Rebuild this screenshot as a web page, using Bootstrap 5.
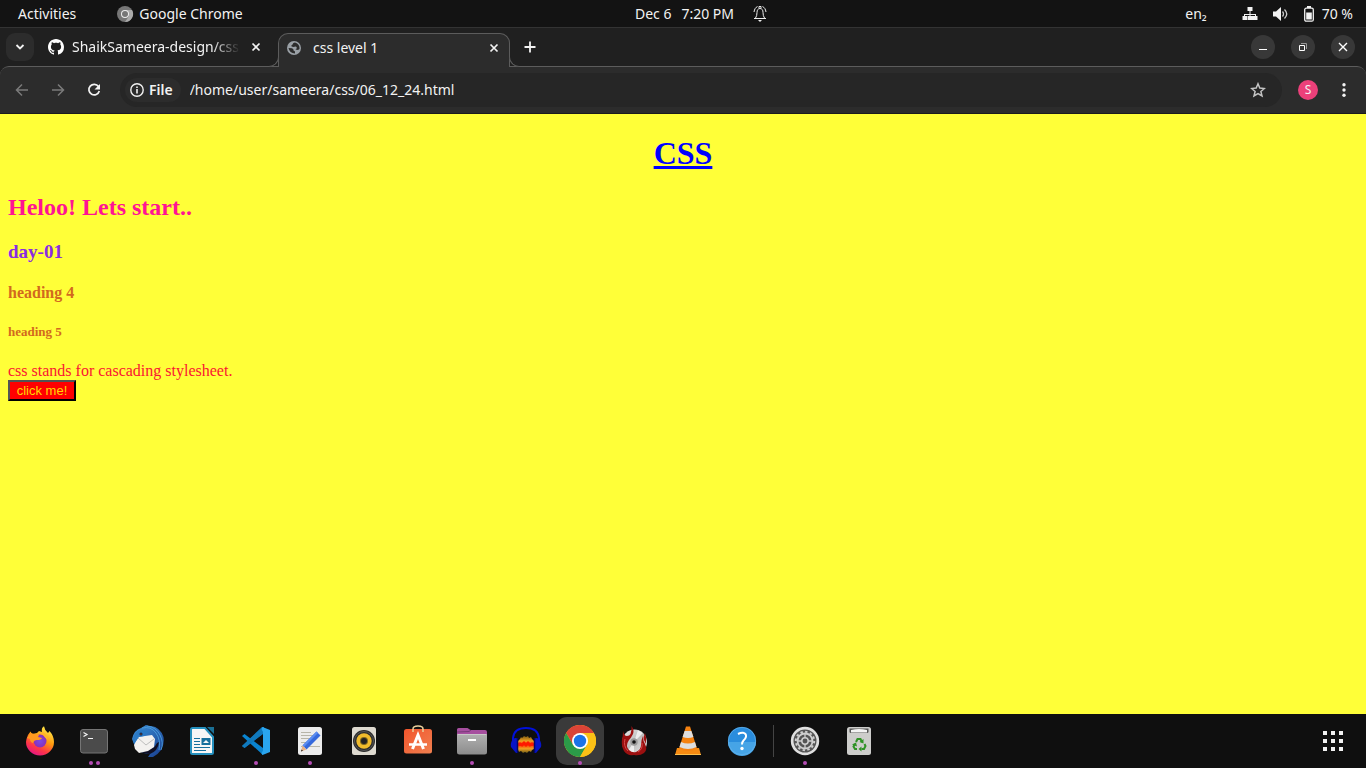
<!DOCTYPE html>
<html lang="en">
<head>
<meta charset="utf-8">
<meta name="viewport" content="width=device-width, initial-scale=1">
<title>css level 1</title>
<link href="https://cdn.jsdelivr.net/npm/bootstrap@5.3.0/dist/css/bootstrap.min.css" rel="stylesheet">
<style>
  :root { --line: #5c5c5c; --frame: #202020; --bar: #2c2c2c; }
  body { font-family: "Noto Sans", "Open Sans", sans-serif; font-size: 14px; line-height: 20px; background: #0f0f0f; color: #f2f2f2; }
  svg { display: block; flex: none; }
  button { font: inherit; color: inherit; }
  .plain { background: none; border: 0; padding: 0; }

  .topbar { height: 28px; background: #131313; border-bottom: 1px solid #333; padding: 0 13px 0 18px; }
  .topbar > div { flex: 1 1 0; }
  .topbar > .clock { flex: none; gap: 10px; padding-left: 32px; }
  .clock svg { margin-left: 8px; }
  .current-app { gap: 5px; margin-left: 40px; }
  .status { gap: 15px; }
  .lang { margin-right: 20px; }
  .tiny { font-size: 14px; line-height: 10px; }

  .tabstrip { height: 38px; background: var(--frame); padding: 5px 11px 0 6px; }
  .tabmenu { width: 28px; height: 28px; border-radius: 9px; background: #2c2c2c; }
  .tab { height: 28px; }
  .tab-idle { width: 244px; padding: 0 14px; }
  .tab-name { overflow: hidden; white-space: nowrap; }
  .fade-end { -webkit-mask-image: linear-gradient(to right, #000 140px, transparent 168px); mask-image: linear-gradient(to right, #000 140px, transparent 168px); }
  .tab-open { position: relative; z-index: 1; width: 232px; height: 34px; padding: 0 9px 6px 8px; background: var(--bar); border: 1px solid var(--line); border-bottom: 0; border-radius: 10px 10px 0 0; }
  .tab-open::before, .tab-open::after { content: ""; position: absolute; bottom: 0; width: 11px; height: 11px; border: 1px solid var(--line); border-top: 0; background: var(--frame); }
  .tab-open::before { left: -11px; border-left: 0; border-radius: 0 0 10px 0; }
  .tab-open::after { right: -11px; border-right: 0; border-radius: 0 0 0 10px; }
  .winbtn { width: 24px; height: 24px; border-radius: 50%; background: #383838; }

  .under { background: var(--frame); }
  .toolbar { height: 48px; background: var(--bar); border-top: 1px solid var(--line); border-bottom: 1px solid #1c1c1c; border-radius: 9px 9px 0 0; padding: 0 14px; }
  .nav-tools { gap: 20px; margin-right: 18px; }
  .side-tools { gap: 18px; margin-left: 16px; }
  .omnibox { height: 34px; border-radius: 17px; background: #262626; padding: 0 16px 0 5px; }
  .chip { height: 24px; border-radius: 12px; background: #2c2c2c; padding: 0 8px 0 5px; gap: 5px; font-weight: 600; }
  .url { background: none; border: 0; color: #f2f2f2; outline: 0; padding: 0 0 0 9px; min-width: 0; }
  .avatar { width: 20px; height: 20px; border-radius: 50%; background: #ec407a; font-size: 12px; line-height: 20px; }

  .sheet { background: #ffff38; font-family: "Liberation Serif", serif; padding: 21px 8px; }
  .sheet h1, .sheet h2, .sheet h3, .sheet h4, .sheet h5, .sheet p { margin: 0; font-weight: 700; }
  .sheet h1 { font-size: 32px; line-height: 37px; color: #0000ff; text-decoration: underline; margin-bottom: 22px; }
  .sheet h2 { font-size: 24px; line-height: 27px; color: #ff1493; margin-bottom: 20px; }
  .sheet h3 { font-size: 19px; line-height: 22px; color: #8a2be2; margin-bottom: 21px; }
  .sheet h4 { font-size: 16px; line-height: 18px; color: #d2691e; margin-bottom: 22px; }
  .sheet h5 { font-size: 13px; line-height: 16px; color: #d2691e; margin-bottom: 22px; }
  .sheet p { font-size: 16px; line-height: 18px; color: #fa1432; font-weight: 400; }
  .clicker { display: block; width: 68px; height: 21px; padding: 0; font: 13px/17px "Liberation Sans", sans-serif; color: #ffd700; background: #f00; border: 2px outset #000; }

  .dock { height: 54px; background: #0f0f0f; padding: 0 17px 0 13px; }
  .app { position: relative; width: 54px; height: 54px; color: inherit; }
  .app-current::before { content: ""; position: absolute; inset: 3px; border-radius: 11px; background: #3a3a3a; }
  .app svg { position: relative; }
  .dots { position: absolute; left: 0; right: 0; bottom: 3px; display: flex; justify-content: center; gap: 3px; }
  .dots i { width: 4px; height: 4px; border-radius: 50%; background: #b44cb4; }
  .rule { width: 1px; height: 32px; background: #444; margin: 0 4px; }
</style>
</head>
<body class="d-flex flex-column min-vh-100">

<header class="topbar d-flex align-items-center">
  <div class="d-flex align-items-center">
    <button class="plain">Activities</button>
    <button class="plain current-app d-flex align-items-center">
      <svg width="18" height="18" viewBox="0 0 18 18"><circle cx="9" cy="9" r="8" fill="#777"/><path d="M9 5h7A8 8 0 0 1 9 17l4-6z" fill="#aaa"/><circle cx="9" cy="9" r="4" fill="#eee"/><circle cx="9" cy="9" r="3" fill="#777"/></svg>
      <span>Google Chrome</span>
    </button>
  </div>
  <div class="clock d-flex align-items-center">
    <span>Dec 6</span><span>7:20 PM</span>
    <svg width="16" height="18" viewBox="0 0 16 18" fill="none" stroke="#eee"><path d="M2 13.500h12M3.500 13Q5 11 5 7.500C5 5 6 3.500 8 3.500s3 1.500 3 4Q11 11 12.500 13M5.500 1.500C3.500 2.500 2.500 4 2 7M10.500 1.500c2 1 3 2.500 3.500 5.500M7 3V1.500h2V3"/><path d="M6 15h4l-2 2z" fill="#eee" stroke="none"/></svg>
  </div>
  <div class="status d-flex align-items-center justify-content-end">
    <span class="lang">en<span class="tiny">₂</span></span>
    <svg width="16" height="16" viewBox="0 0 16 16" fill="#f2f2f2"><path d="M5.500 1h5v4H8.500v3H14v2h1.500v4h-5v-4H13V9H8.500v1h2v4h-5v-4h2V9H3v1h2v4H.5v-4H2V8h5.500V5h-2z"/></svg>
    <svg width="16" height="14" viewBox="0 0 16 14"><path d="M0 4.500h3L8 0v14L3 9.500H0z" fill="#f2f2f2"/><path d="M9.500 4.500q2 2.500 0 5M11.500 2.500q4.500 4.500 0 9" fill="none" stroke="#ccc" stroke-width="1.300"/></svg>
    <span class="d-flex align-items-center gap-2"><svg width="10" height="16" viewBox="0 0 10 16"><rect x=".7" y="2.200" width="8.600" height="13" rx="1.500" fill="none" stroke="#f2f2f2" stroke-width="1.300"/><path d="M3 0h4v2H3zM2.200 6.500h5.600v7H2.200z" fill="#f2f2f2"/></svg>70 %</span>
  </div>
</header>

<nav class="tabstrip d-flex align-items-start">
  <button class="plain tabmenu d-flex align-items-center justify-content-center" aria-label="Search tabs"><svg width="10" height="10" viewBox="0 0 10 10" fill="none" stroke="#f2f2f2" stroke-width="1.800"><path d="M1.500 3L5 6.500 8.500 3"/></svg></button>
  <div class="tab tab-idle d-flex align-items-center">
    <svg width="16" height="16" viewBox="0 0 16 16" fill="#fff"><path d="M8 0C3.580 0 0 3.580 0 8c0 3.540 2.290 6.530 5.470 7.590.4.070.55-.17.55-.38 0-.19-.01-.82-.01-1.490-2.010.37-2.530-.49-2.690-.94-.09-.23-.48-.94-.82-1.130-.28-.15-.68-.52-.01-.53.63-.01 1.080.58 1.230.82.72 1.210 1.870.87 2.330.66.07-.52.28-.87.51-1.070-1.780-.2-3.640-.89-3.640-3.950 0-.87.31-1.590.82-2.150-.08-.2-.36-1.020.08-2.120 0 0 .67-.21 2.200.82.64-.18 1.320-.27 2-.27s1.360.09 2 .27c1.530-1.040 2.200-.82 2.200-.82.44 1.100.16 1.920.08 2.120.51.56.82 1.270.82 2.150 0 3.070-1.870 3.750-3.650 3.950.29.25.54.73.54 1.480 0 1.070-.01 1.930-.01 2.200 0 .21.15.46.55.38A8.010 8.010 0 0 0 16 8c0-4.420-3.580-8-8-8z"/></svg>
    <span class="tab-name fade-end flex-fill ms-2">ShaikSameera-design/css</span>
    <button class="plain ms-2" aria-label="Close tab"><svg width="16" height="16" viewBox="0 0 16 16" stroke="#f2f2f2" stroke-width="1.700"><path d="M4.500 4.500l7 7M11.500 4.500l-7 7"/></svg></button>
  </div>
  <div class="tab tab-open d-flex align-items-center">
    <svg width="14" height="14" viewBox="0 0 14 14"><circle cx="7" cy="7" r="7" fill="#9aa0a6"/><path d="M1.500 7L5 7.300Q7 8 6.500 9.500L8 10.500v2Q2.500 12 1.500 7zM8 1.500q-2 0-2.500 2L4 5l2 1 3-.5L10 7 8.500 8.500 11 9l1.500-1Q13 3 8 1.500z" fill="#2c2c2c"/></svg>
    <span class="tab-name flex-fill ms-2 ps-1">css level 1</span>
    <button class="plain" aria-label="Close tab"><svg width="12" height="16" viewBox="2 0 12 16" stroke="#f2f2f2" stroke-width="1.700"><path d="M4.500 4.500l7 7M11.500 4.500l-7 7"/></svg></button>
  </div>
  <button class="plain tab d-flex align-items-center ms-2" aria-label="New tab"><svg width="24" height="24" viewBox="0 0 24 24" stroke="#f2f2f2" stroke-width="1.800"><path d="M12 6.500v11M6.500 12h11"/></svg></button>
  <div class="tab d-flex align-items-center ms-auto gap-3">
    <button class="plain winbtn" aria-label="Minimize"><svg width="24" height="24" viewBox="0 0 24 24"><path d="M8 14h8v1H8z" fill="#fff"/></svg></button>
    <button class="plain winbtn" aria-label="Restore"><svg width="24" height="24" viewBox="0 0 24 24" fill="none"><path d="M10 8.500h5.500V14" stroke="#999"/><path d="M8.500 10.500h5v5h-5z" stroke="#fff"/></svg></button>
    <button class="plain winbtn" aria-label="Close"><svg width="24" height="24" viewBox="0 0 24 24" stroke="#fff" stroke-width="1.400"><path d="M8 8l8 8M16 8l-8 8"/></svg></button>
  </div>
</nav>

<div class="under">
<div class="toolbar d-flex align-items-center">
  <div class="nav-tools d-flex">
    <button class="plain" aria-label="Back"><svg width="16" height="16" viewBox="0 0 16 16" fill="none" stroke="#7a7a7a" stroke-width="1.500"><path d="M14 8H3M8 2.500L2.500 8 8 13.500"/></svg></button>
    <button class="plain" aria-label="Forward"><svg width="16" height="16" viewBox="0 0 16 16" fill="none" stroke="#7a7a7a" stroke-width="1.500"><path d="M2 8h11M8 2.500L13.500 8 8 13.500"/></svg></button>
    <button class="plain" aria-label="Reload"><svg width="16" height="16" viewBox="0 0 16 16"><path d="M12.500 4.500A5.300 5.300 0 1 0 13.300 9" fill="none" stroke="#f2f2f2" stroke-width="1.700"/><path d="M14 2v5.500H8.500z" fill="#f2f2f2"/></svg></button>
  </div>
  <div class="omnibox d-flex align-items-center flex-fill">
    <button class="plain chip d-flex align-items-center"><svg width="14" height="14" viewBox="0 0 14 14"><circle cx="7" cy="7" r="6.200" fill="none" stroke="#f2f2f2" stroke-width="1.400"/><path d="M6.200 3.500h1.600V5H6.200zM6.200 6h1.600v4.500H6.200z" fill="#f2f2f2"/></svg>File</button>
    <input class="url flex-fill" type="text" aria-label="Address" value="/home/user/sameera/css/06_12_24.html">
    <button class="plain" aria-label="Bookmark"><svg width="16" height="16" viewBox="0 0 16 16" fill="none" stroke="#c4c4c4" stroke-width="1.500"><path d="M8 1.800l1.800 4.300 4.600.4-3.500 3 1.100 4.500-4-2.400L4 14l1.100-4.500-3.500-3 4.600-.4z"/></svg></button>
  </div>
  <div class="side-tools d-flex align-items-center">
    <button class="plain avatar">S</button>
    <button class="plain" aria-label="Menu"><svg width="16" height="16" viewBox="0 0 16 16" fill="#f2f2f2"><circle cx="8" cy="2.800" r="1.700"/><circle cx="8" cy="8" r="1.700"/><circle cx="8" cy="13.200" r="1.700"/></svg></button>
  </div>
</div>
</div>

<main class="sheet flex-fill">
  <h1 class="text-center">CSS</h1>
  <h2>Heloo! Lets start..</h2>
  <h3>day-01</h3>
  <h4>heading 4</h4>
  <h5>heading 5</h5>
  <p>css stands for cascading stylesheet.</p>
  <button class="clicker">click me!</button>
</main>

<footer class="dock d-flex align-items-center">
  <svg width="0" height="0" class="position-absolute">
    <defs>
      <linearGradient id="fox" x1=".8" y1="0" x2=".3" y2="1"><stop offset="0" stop-color="#fff44f"/><stop offset=".45" stop-color="#ff980e"/><stop offset=".75" stop-color="#ff3647"/><stop offset="1" stop-color="#e31587"/></linearGradient>
      <radialGradient id="orb"><stop offset="0" stop-color="#7a4be8"/><stop offset="1" stop-color="#8a2fb8"/></radialGradient>
      <linearGradient id="bird" x1="0" y1="0" x2="1" y2="1"><stop offset="0" stop-color="#3f95dd"/><stop offset="1" stop-color="#173b8c"/></linearGradient>
      <linearGradient id="steel" x1="0" y1="0" x2="0" y2="1"><stop offset="0" stop-color="#b0b0b0"/><stop offset="1" stop-color="#8c8c8c"/></linearGradient>
      <linearGradient id="bag" x1="0" y1="0" x2="1" y2="1"><stop offset="0" stop-color="#f2552c"/><stop offset="1" stop-color="#f08050"/></linearGradient>
      <linearGradient id="disc" x1="0" y1="0" x2="1" y2="1"><stop offset="0" stop-color="#eee"/><stop offset=".5" stop-color="#bbb"/><stop offset="1" stop-color="#eee"/></linearGradient>
      <linearGradient id="blaze" x1="0" y1="0" x2="0" y2="1"><stop offset="0" stop-color="#7a5a14"/><stop offset=".3" stop-color="#f0a020"/><stop offset=".5" stop-color="#ff3000"/><stop offset=".75" stop-color="#f0a020"/><stop offset="1" stop-color="#6a5a18"/></linearGradient>
    </defs>
  </svg>
  <a href="#" class="app d-flex align-items-center justify-content-center" aria-label="Firefox"><svg width="32" height="32" viewBox="0 0 32 32"><path d="M2.500 14Q4 9 6.500 6.500L8 9l5-1 2-2 3 1Q17 3 20 1.200 20.500 5 24 8l1.500-2Q30 11 30 17a14 13.500 0 0 1-28 0z" fill="url(#fox)"/><circle cx="16" cy="16" r="6.500" fill="url(#orb)"/><path d="M3 13l4-5 3 1 5 1-1 2 4 1q-1 2-5 2-3 0-4 3-3-1-3-4z" fill="#ff9a20"/><path d="M18 7q6 2 5.500 8l-3-3q-1-3-4-4z" fill="#ffb52a"/></svg></a>
  <a href="#" class="app d-flex align-items-center justify-content-center" aria-label="Terminal"><svg width="32" height="32" viewBox="0 0 32 32"><rect x="2.500" y="4.500" width="27" height="23.500" rx="2.500" fill="#4b4b4b" stroke="#757575"/><path d="M5.500 7.500l3.500 2-3.500 2M10 13.500h5" fill="none" stroke="#f4f4f4" stroke-width="1.200"/></svg><span class="dots"><i></i><i></i></span></a>
  <a href="#" class="app d-flex align-items-center justify-content-center" aria-label="Thunderbird"><svg width="32" height="32" viewBox="0 0 32 32"><path d="M0 14Q2 5 9 3l5-3q2 1 5 1 9 1 12.500 11 2 13-10.500 20l-5 0 2-3Q5 29 0 14z" fill="url(#bird)"/><path d="M10 3q9-2 14 5t3 17M15 1q9 1 13 9t1 15" fill="none" stroke="#4c9edc" stroke-width=".9"/><path d="M8 26q4-3 9-2 5 0 8-6l2-1q-1 9-9 12-6 0-10-3z" fill="#0f0f24"/><path d="M2 20l4-8 14-2 3 4-1 8-6 4-9 2-4-4z" fill="#f3f1ef"/><path d="M6 13l8 7 8-6" fill="none" stroke="#bdbdbd"/><path d="M1 14Q3 5 10 5l10 2q-6 0-8 4l-5 1-5 7z" fill="#2b79c4"/><circle cx="9" cy="9" r="1.500" fill="#0b1a44"/><circle cx="9" cy="9" r=".6" fill="#e07820"/></svg></a>
  <a href="#" class="app d-flex align-items-center justify-content-center" aria-label="LibreOffice Writer"><svg width="32" height="32" viewBox="0 0 32 32"><path d="M6.500 3H19l8 9v15.500a1.500 1.500 0 0 1-1.500 1.500h-19A1.500 1.500 0 0 1 5 27.500v-23A1.500 1.500 0 0 1 6.500 3z" fill="#f6f6f6" stroke="#2590be" stroke-width="2"/><path d="M21 2h7v7z" fill="#1b7095"/><path d="M8 13.500h6M8 16.500h6M8 19.500h6M8 22.500h16M8 25.500h12" stroke="#176f9c" stroke-width="1.200"/><rect x="15.500" y="13" width="9" height="7" fill="#176f9c"/><path d="M17 18l3-3 3 3z" fill="#f6f6f6"/></svg></a>
  <a href="#" class="app d-flex align-items-center justify-content-center" aria-label="Visual Studio Code"><svg width="32" height="32" viewBox="0 0 32 32"><path d="M2 11l2.500-2L23 23v7z" fill="#0a84d0"/><path d="M2 21l2.500 2L23 9V2z" fill="#0070b8"/><path d="M2 21l2.500 2L24 8V2L22 2z" fill="#1079bd"/><path d="M22.500 2L30 5v22l-7.500 3-1-1.500 1.500-3V7l-1.500-3z" fill="#2aa5ee"/></svg><span class="dots"><i></i></span></a>
  <a href="#" class="app d-flex align-items-center justify-content-center" aria-label="Text Editor"><svg width="32" height="32" viewBox="0 0 32 32"><rect x="4" y="2" width="24" height="28" rx="2.500" fill="#ececec"/><path d="M7 7.500h10M7 10.500h13M7 13.500h11M7 17.500h9M7 21.500h19" stroke="#b7b5a9"/><path d="M22.500 6.500l4 4-14 14-4-4z" fill="#3468dc"/><path d="M22.500 6.500l1.500 1.500L10 22l-1.500-1.500z" fill="#5a8cf0"/><path d="M8.500 20.500l4 4L7 26.500z" fill="#e9b182"/><path d="M7.500 24.500l1.500 1.300-2 .8z" fill="#222"/></svg><span class="dots"><i></i></span></a>
  <a href="#" class="app d-flex align-items-center justify-content-center" aria-label="Rhythmbox"><svg width="32" height="32" viewBox="0 0 32 32"><rect x="4" y="2" width="24" height="28" rx="2.500" fill="#dedad0"/><circle cx="16" cy="16" r="11" fill="#2b2b2b"/><circle cx="16" cy="16" r="9.500" fill="none" stroke="#555"/><circle cx="16" cy="16" r="7.700" fill="#f0bb2c"/><circle cx="16" cy="16" r="4" fill="#7d6520"/><circle cx="16" cy="16" r="3" fill="#222"/></svg></a>
  <a href="#" class="app d-flex align-items-center justify-content-center" aria-label="Software"><svg width="32" height="32" viewBox="0 0 32 32"><rect x="2" y="4" width="28" height="24.500" rx="2.500" fill="url(#bag)"/><path d="M11 7V4q0-3 5-3t5 3v3" fill="none" stroke="#e8cf9b" stroke-width="1.500"/><path d="M10.500 24L16 10l5.500 14" fill="none" stroke="#fff" stroke-width="3"/><path d="M7 19.500h18" stroke="#fff" stroke-width="2.500"/></svg></a>
  <a href="#" class="app d-flex align-items-center justify-content-center" aria-label="Files"><svg width="32" height="32" viewBox="0 0 32 32"><path d="M1 20V4.500a1.500 1.500 0 0 1 1.500-1.500h9l3 2H29a2 2 0 0 1 2 2v12z" fill="#a64f9f"/><path d="M1 7l12-.5L15 5" fill="none" stroke="#773b78"/><path d="M1 9.500h30V27a2.500 2.500 0 0 1-2.500 2.500h-25A2.500 2.500 0 0 1 1 27z" fill="url(#steel)"/><path d="M1.500 9.500h29" stroke="#c9c9c9"/><rect x="12" y="14" width="8" height="2" fill="#fff"/></svg><span class="dots"><i></i></span></a>
  <a href="#" class="app d-flex align-items-center justify-content-center" aria-label="Audacity"><svg width="32" height="32" viewBox="0 0 32 32"><path d="M8 16l2-2 1-2 1 1 2-2 2 1 2-1 1 2 2-1 1 2 2 2v8l-2 1-1 2-2-1-2 2-2-1-2 1-2-2-2 1-1-2-2-1z" fill="url(#blaze)"/><path d="M8 20l2-1 2 1 2-2 2 2 2-2 2 2 2-1 2 1" fill="none" stroke="#ff1800" stroke-width="3"/><path d="M3 20V13Q4 3 16 3t13 10v7" fill="none" stroke="#0010dc" stroke-width="2"/><path d="M3 14q3-2 5 0v14H6l-5-6q-1-4 2-8zM29 14q-3-2-5 0v14h2l5-6q1-4-2-8z" fill="#0714c8"/><path d="M7.500 13v15M24.500 13v15" stroke="#050866" stroke-width="1.500"/></svg></a>
  <a href="#" class="app app-current d-flex align-items-center justify-content-center" aria-label="Google Chrome"><svg width="32" height="32" viewBox="0 0 32 32"><circle cx="16" cy="16" r="16" fill="#fbc116"/><path d="M16 8h13.860A16 16 0 0 0 2.140 8l6.930 12z" fill="#db4437"/><path d="M2.140 8A16 16 0 0 0 16 32l6.930-12L16 23.500 9.070 20z" fill="#2b9b48"/><path d="M16 8h13.860A16 16 0 0 1 16 32l6.930-12z" fill="#fbc116"/><circle cx="16" cy="16" r="8" fill="#fff"/><circle cx="16" cy="16" r="6.200" fill="#1a73e8"/></svg><span class="dots"><i></i></span></a>
  <a href="#" class="app d-flex align-items-center justify-content-center" aria-label="Brasero"><svg width="32" height="32" viewBox="0 0 32 32"><circle cx="16.500" cy="17" r="12.500" fill="url(#disc)"/><path d="M16 17L20 5l5 3zM16 17L9 27l7 3z" fill="#fff" opacity=".7"/><path d="M5 6q1 5 4 5 5 0 4.500-10 3 4 1.500 8-2 4-4 6-4 6 0 10 3 3 7 2 5-2 5-7 0-5 2-9 0 5 2 8 3 6-1 9-4 3-10 2-7 1-10-4-3-5-2-12 1-3 1-8z" fill="#9b1010"/><path d="M27 8q-2 4-1 7l2 4q1-6-1-11z" fill="#9b1010"/><path d="M7 14q-2 7 3 12M24 18q1 6-4 9" fill="none" stroke="#d94a4a"/><circle cx="16" cy="17" r="3.700" fill="#999"/><circle cx="16" cy="17" r="1.800" fill="#111"/></svg></a>
  <a href="#" class="app d-flex align-items-center justify-content-center" aria-label="VLC"><svg width="32" height="32" viewBox="0 0 32 32"><path d="M5 23h22l2 7H3z" fill="#f78b12"/><path d="M14 1.500h4l7 22q-9 5-18 0z" fill="#f58210"/><path d="M12.600 6h6.800l2 6q-5.400 2-10.800 0zM9 17q7 3 14 0l1.500 5q-8.500 4-17 0z" fill="#dedede"/><path d="M3 29h26v1H3z" fill="#ffc04c"/></svg></a>
  <a href="#" class="app d-flex align-items-center justify-content-center" aria-label="Help"><svg width="32" height="32" viewBox="0 0 32 32"><circle cx="16" cy="16" r="14" fill="#2a8ddd"/><path d="M2 17h28a14 14 0 0 1-28 0z" fill="#46a4e6"/><circle cx="16" cy="16" r="13.700" fill="none" stroke="#67b5ec" stroke-width=".7"/><path d="M12 9q3-1.500 5-1.200 3.500.7 3 4-.5 2-2.500 3.700-1.500 1.500-1.500 4" fill="none" stroke="#fff" stroke-width="2"/><circle cx="16" cy="23.500" r="1.700" fill="#fff"/></svg></a>
  <span class="rule"></span>
  <a href="#" class="app d-flex align-items-center justify-content-center" aria-label="Settings"><svg width="32" height="32" viewBox="0 0 32 32" fill="none"><circle cx="16" cy="16" r="14.200" fill="#dfdfdf"/><circle cx="16" cy="16" r="11.500" fill="#555"/><circle cx="16" cy="16" r="9.200" stroke="#cfcfcf" stroke-width="2" stroke-dasharray="2.400 2.400"/><circle cx="16" cy="16" r="7.500" stroke="#cfcfcf" stroke-width="1.800"/><circle cx="16" cy="16" r="3.200" stroke="#cfcfcf" stroke-width="1.500"/><path d="M16 9v4M16 19v4M9 16h4M19 16h4" stroke="#cfcfcf" stroke-width="1.300"/></svg><span class="dots"><i></i></span></a>
  <a href="#" class="app d-flex align-items-center justify-content-center" aria-label="Trash"><svg width="32" height="32" viewBox="0 0 32 32"><rect x="4" y="2" width="24" height="28" rx="2.500" fill="#cdcdcb"/><path d="M6.500 3.500h19V6.500q0 1.500-1.500 1.500H8q-1.500 0-1.500-1.500z" fill="#555"/><path d="M8 5q8-2 16 0v2.500H8z" fill="#f4f4f4"/><path d="M13 17l1.500-3h3l1.500 3M21.500 19l1 2-1.500 3h-2.500M14 24h-2l-1.500-2.500L12 19" fill="none" stroke="#2f9226" stroke-width="2"/><path d="M20.500 14v4.500l-4-1.500zM18.500 21.500v5L15.500 24zM9 19.500l4-2 1 4z" fill="#2f9226"/></svg></a>
  <button class="plain ms-auto p-1" aria-label="Show applications"><svg width="24" height="24" viewBox="0 0 24 24" fill="#f2f2f2"><path d="M2 2h4v4H2zM10 2h4v4h-4zM18 2h4v4h-4zM2 10h4v4H2zM10 10h4v4h-4zM18 10h4v4h-4zM2 18h4v4H2zM10 18h4v4h-4zM18 18h4v4h-4z"/></svg></button>
</footer>
<script src="https://cdn.jsdelivr.net/npm/bootstrap@5.3.0/dist/js/bootstrap.bundle.min.js"></script>
</body>
</html>
